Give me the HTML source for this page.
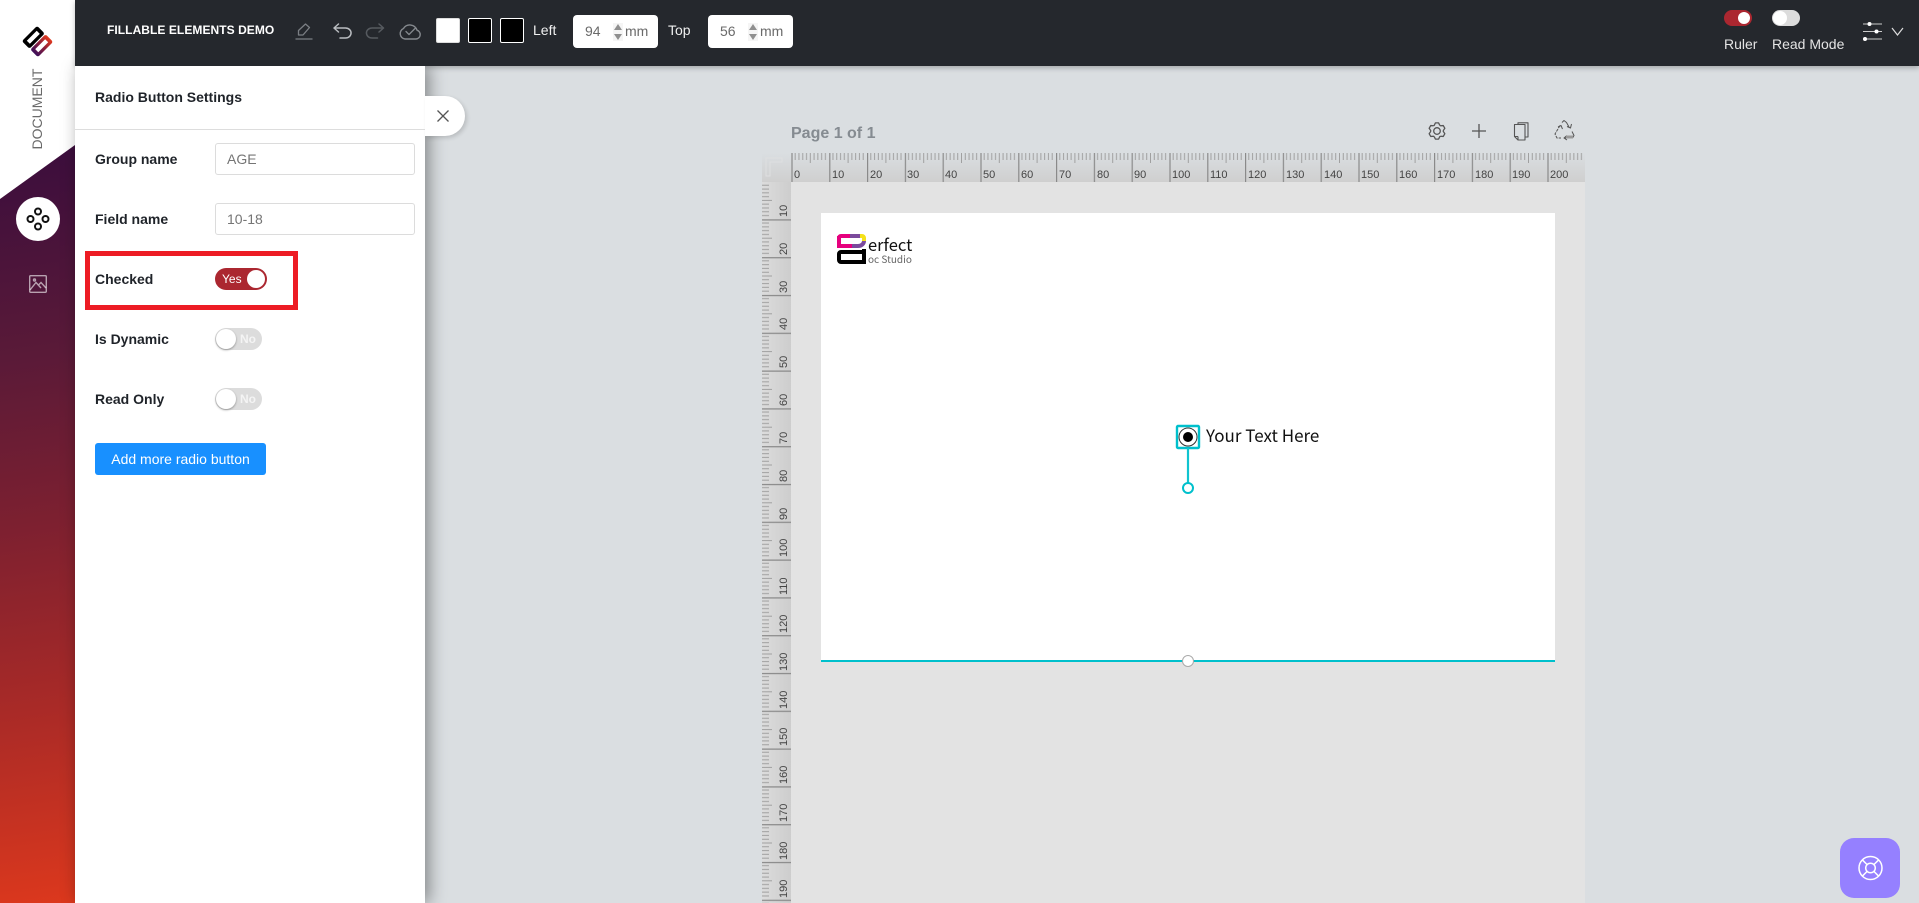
<!DOCTYPE html>
<html>
<head>
<meta charset="utf-8">
<title>Fillable Elements Demo</title>
<style>
html,body{margin:0;padding:0;width:1919px;height:903px;overflow:hidden;background:#dadee1;font-family:"Liberation Sans",sans-serif}
div,span,svg{position:absolute;box-sizing:border-box}
.t{white-space:nowrap;line-height:1}
.lbl{left:95px;font-size:14px;font-weight:bold;color:#1f2329;line-height:16px}
.inp{left:215px;width:200px;height:32px;border:1px solid #dcdcdc;border-radius:3px;background:#fff}
.sw{top:18px;width:24px;height:25px;border:1.5px solid #fff;border-radius:2px;background:#000}
.num{top:15px;width:85px;height:33px;background:#fff;border-radius:4px}
.knob{background:#fff;border-radius:50%}
.spin{top:23px;width:10px;height:18px;background:#f5f5f5}
</style>
</head>
<body>

<!-- workspace -->
<div style="left:791px;top:182px;width:794px;height:721px;background:#e3e3e3"></div>
<div style="left:821px;top:213px;width:734px;height:447px;background:#fff"></div>

<!-- rulers -->
<svg style="left:0;top:0" width="1919" height="903" viewBox="0 0 1919 903">
  <defs>
    <linearGradient id="rh" x1="0" y1="0" x2="0" y2="1"><stop offset="0" stop-color="#dadee1"/><stop offset="1" stop-color="#cfcfcf"/></linearGradient>
    <linearGradient id="rv" x1="0" y1="0" x2="1" y2="0"><stop offset="0" stop-color="#dcdcdc"/><stop offset="1" stop-color="#cdcdcd"/></linearGradient>
    <pattern id="ph" patternUnits="userSpaceOnUse" x="791.4" y="153" width="37.8" height="29">
      <path d="M3.78 0V7M7.56 0V7M11.34 0V7M15.12 0V7M18.9 0V10M22.68 0V7M26.46 0V7M30.24 0V7M34.02 0V7" stroke="#a0a0a0" stroke-width="1" fill="none"/>
      <path d="M.6 0V29" stroke="#8a8a8a" stroke-width="1.2"/>
    </pattern>
    <pattern id="pv" patternUnits="userSpaceOnUse" x="762" y="181.5" width="29" height="37.8">
      <path d="M0 3.78H7M0 7.56H7M0 11.34H7M0 15.12H7M0 18.9H10M0 22.68H7M0 26.46H7M0 30.24H7M0 34.02H7" stroke="#a0a0a0" stroke-width="1" fill="none"/>
      <path d="M0 .6H29" stroke="#8a8a8a" stroke-width="1.2"/>
    </pattern>
  </defs>
  <rect x="762" y="153" width="823" height="29" fill="url(#rh)"/>
  <rect x="762" y="182" width="29" height="721" fill="url(#rv)"/>
  <rect x="791" y="153" width="794" height="29" fill="url(#ph)"/>
  <rect x="762" y="183" width="29" height="720" fill="url(#pv)"/>
  <path d="M766 158H782V162H770V176H766Z" fill="none" stroke="#dedfe0" stroke-width="1"/>
  <g font-family="Liberation Sans" font-size="11" fill="#444">
    <text x="794" y="178">0</text><text x="832" y="178">10</text><text x="870" y="178">20</text><text x="907" y="178">30</text><text x="945" y="178">40</text><text x="983" y="178">50</text><text x="1021" y="178">60</text><text x="1059" y="178">70</text><text x="1097" y="178">80</text><text x="1134" y="178">90</text><text x="1172" y="178">100</text><text x="1210" y="178">110</text><text x="1248" y="178">120</text><text x="1286" y="178">130</text><text x="1324" y="178">140</text><text x="1361" y="178">150</text><text x="1399" y="178">160</text><text x="1437" y="178">170</text><text x="1475" y="178">180</text><text x="1512" y="178">190</text><text x="1550" y="178">200</text>
    <text transform="translate(787 217) rotate(-90)">10</text><text transform="translate(787 255) rotate(-90)">20</text><text transform="translate(787 293) rotate(-90)">30</text><text transform="translate(787 330) rotate(-90)">40</text><text transform="translate(787 368) rotate(-90)">50</text><text transform="translate(787 406) rotate(-90)">60</text><text transform="translate(787 444) rotate(-90)">70</text><text transform="translate(787 482) rotate(-90)">80</text><text transform="translate(787 520) rotate(-90)">90</text><text transform="translate(787 557) rotate(-90)">100</text><text transform="translate(787 595) rotate(-90)">110</text><text transform="translate(787 633) rotate(-90)">120</text><text transform="translate(787 671) rotate(-90)">130</text><text transform="translate(787 709) rotate(-90)">140</text><text transform="translate(787 746) rotate(-90)">150</text><text transform="translate(787 784) rotate(-90)">160</text><text transform="translate(787 822) rotate(-90)">170</text><text transform="translate(787 860) rotate(-90)">180</text><text transform="translate(787 898) rotate(-90)">190</text>
  </g>

  <!-- bottom guide line -->
  <rect x="821" y="660" width="734" height="2" fill="#00c0cc"/>
  <circle cx="1188" cy="661" r="5.5" fill="#fff" stroke="#aaa" stroke-width="1"/>

  <!-- radio element -->
  <rect x="1177" y="426" width="22" height="22" fill="#fff" stroke="#00c0cc" stroke-width="2.4" rx="1"/>
  <circle cx="1188" cy="437" r="9" fill="#fff" stroke="#333" stroke-width="1"/>
  <circle cx="1188" cy="437" r="5" fill="#000"/>
  <path d="M1188 448V483" stroke="#10c4d0" stroke-width="2.2"/>
  <circle cx="1188" cy="488" r="5" fill="#fff" stroke="#00c0cc" stroke-width="2"/>

  <!-- document logo -->
  <g fill="none" stroke-width="4">
    <path d="M852 246H839V238a2 2 0 0 1 2-2H852" stroke="#e6007e"/>
    <path d="M839 247V236" stroke="#e6007e"/>
    <path d="M850 236H861" stroke="#7b4a9c"/>
    <path d="M852 246H858a6 5 0 0 0 6-5" stroke="#7b4a9c"/>
    <path d="M860 236H862a2 2 0 0 1 2 2V241" stroke="#f5e11a"/>
    <path d="M864 249V262H841a2 2 0 0 1-2-2V254a2 2 0 0 1 2-2H864" stroke="#000"/>
  </g>
  <text x="868" y="251" font-family="Noto Sans CJK SC" font-size="16.5" fill="#111">erfect</text>
  <text x="868" y="263" font-family="Noto Sans CJK SC" font-size="10" fill="#666">oc Studio</text>
  <text x="1206" y="442" font-family="Noto Sans CJK SC" font-size="17" fill="#111">Your Text Here</text>

  <!-- page tools -->
  <g fill="none" stroke="#555" stroke-width="1.3" stroke-linejoin="round">
    <g transform="translate(1437 131)">
      <circle r="3.3"/>
      <path d="M2.760 -5.660L1.580 -8.150L-1.580 -8.150L-2.760 -5.660L-3.520 -5.220"/>
      <path transform="rotate(60)" d="M2.760 -5.660L1.580 -8.150L-1.580 -8.150L-2.760 -5.660L-3.520 -5.220"/>
      <path transform="rotate(120)" d="M2.760 -5.660L1.580 -8.150L-1.580 -8.150L-2.760 -5.660L-3.520 -5.220"/>
      <path transform="rotate(180)" d="M2.760 -5.660L1.580 -8.150L-1.580 -8.150L-2.760 -5.660L-3.520 -5.220"/>
      <path transform="rotate(240)" d="M2.760 -5.660L1.580 -8.150L-1.580 -8.150L-2.760 -5.660L-3.520 -5.220"/>
      <path transform="rotate(300)" d="M2.760 -5.660L1.580 -8.150L-1.580 -8.150L-2.760 -5.660L-3.520 -5.220"/>
    </g>
    <path d="M1479 124V138M1472 131H1486"/>
    <path d="M1518 124V122.800H1528V137H1525" stroke="#555" stroke-width="1.1"/>
    <path d="M1514.500 124.500H1525V140H1518L1514.500 136.500Z" stroke="#555" stroke-width="1.1"/>
    <path d="M1518 136.500V140M1514.500 136.500H1518" stroke="#555" stroke-width="1.1"/>
    <g stroke-width="1">
      <path d="M1562 122.500L1564 120.500L1566.500 122.500L1569 127"/>
      <path d="M1567 126.500L1570.500 128L1571.500 124"/>
      <path d="M1560 125.500L1555 134L1557 138H1561" stroke-dasharray="3 1"/>
      <path d="M1558 127L1561 125.500L1562.500 129"/>
      <path d="M1572 131.500L1574 135.500L1572.500 138H1565"/>
      <path d="M1567 135.500L1564 138L1567 140"/>
    </g>
  </g>
  <rect x="1566" y="135.500" width="7" height="3" fill="#999"/>
</svg>

<div class="t" style="left:791px;top:126px;font-size:16px;font-weight:bold;color:#858b91">Page 1 of 1</div>

<!-- left sidebar -->
<div style="left:0;top:0;width:75px;height:903px;background:#fff"></div>
<div style="left:0;top:145px;width:75px;height:758px;background:linear-gradient(172deg,#3a0d3d 0%,#5a1a38 28%,#7d2030 50%,#a92a27 74%,#dc381d 100%);clip-path:polygon(0 54px,75px 0,75px 758px,0 758px)"></div>
<svg style="left:0;top:0" width="75" height="300" viewBox="0 0 75 300">
  <defs><linearGradient id="lg" x1="0" y1="0" x2="1" y2="0"><stop offset="0" stop-color="#3b0f5a"/><stop offset=".5" stop-color="#8a1f3c"/><stop offset="1" stop-color="#e23a1e"/></linearGradient></defs>
  <g transform="translate(37.5 41.5) rotate(-45) scale(1.08)">
    <rect x="-10" y="-10.500" width="20" height="10" rx="2" fill="#000"/>
    <rect x="-6.500" y="-7.500" width="13" height="4" fill="#fff"/>
    <rect x="-10" y="0.500" width="20" height="10" rx="2" fill="url(#lg)"/>
    <rect x="-6.500" y="3.500" width="13" height="4" fill="#fff"/>
  </g>
  <circle cx="38" cy="219" r="22" fill="#fff"/>
  <g fill="none" stroke="#111" stroke-width="2">
    <circle cx="38" cy="211.500" r="3"/><circle cx="38" cy="226.500" r="3"/><circle cx="30.500" cy="219" r="3"/><circle cx="45.500" cy="219" r="3"/>
  </g>
  <g fill="none" stroke="#fff" stroke-opacity=".6" stroke-width="1.4">
    <rect x="29.700" y="275.700" width="16.600" height="16.600" rx="1"/>
    <path d="M30 290L36 282.500L41 288M38 285.500L41 282.500L46 288"/>
    <circle cx="34.500" cy="280" r="1"/>
  </g>
</svg>
<div class="t" style="left:37px;top:109px;font-size:14px;color:#6a6a6a;transform:translate(-50%,-50%) rotate(-90deg)">DOCUMENT</div>

<!-- settings panel -->
<div style="left:75px;top:66px;width:350px;height:837px;background:#fff;box-shadow:4px 0 16px rgba(0,0,0,.4)"></div>
<div style="left:425px;top:96px;width:40px;height:40px;background:#fff;border-radius:0 20px 20px 0;box-shadow:2px 2px 4px rgba(0,0,0,.15)"></div>
<svg style="left:436px;top:109px" width="14" height="14" viewBox="0 0 14 14"><path d="M1.500 1.500L12.500 12.500M12.500 1.500L1.500 12.500" stroke="#555" stroke-width="1.3"/></svg>

<div class="t" style="left:95px;top:90px;font-size:14px;font-weight:bold;color:#1f2329">Radio Button Settings</div>
<div style="left:75px;top:129px;width:350px;height:1px;background:#ddd"></div>

<div class="lbl" style="top:151px">Group name</div>
<div class="inp" style="top:143px"></div>
<div class="t" style="left:227px;top:152px;font-size:14px;color:#757575">AGE</div>

<div class="lbl" style="top:211px">Field name</div>
<div class="inp" style="top:203px"></div>
<div class="t" style="left:227px;top:212px;font-size:14px;color:#757575">10-18</div>

<div style="left:85px;top:251px;width:213px;height:59px;border:5px solid #ed1c24"></div>
<div class="lbl" style="top:271px">Checked</div>
<div style="left:215px;top:268px;width:52px;height:22px;border-radius:11px;background:#ab2730"></div>
<div class="t" style="left:222px;top:273px;font-size:12px;color:#fff">Yes</div>
<div class="knob" style="left:247px;top:270px;width:18px;height:18px"></div>

<div class="lbl" style="top:331px">Is Dynamic</div>
<div style="left:215px;top:328px;width:47px;height:22px;border-radius:11px;background:#dcdcdc"></div>
<div class="t" style="left:240px;top:333px;font-size:12px;font-weight:bold;color:#f4f4f4">No</div>
<div class="knob" style="left:216px;top:329px;width:20px;height:20px;box-shadow:0 1px 2px rgba(0,0,0,.35)"></div>

<div class="lbl" style="top:391px">Read Only</div>
<div style="left:215px;top:388px;width:47px;height:22px;border-radius:11px;background:#dcdcdc"></div>
<div class="t" style="left:240px;top:393px;font-size:12px;font-weight:bold;color:#f4f4f4">No</div>
<div class="knob" style="left:216px;top:389px;width:20px;height:20px;box-shadow:0 1px 2px rgba(0,0,0,.35)"></div>

<div style="left:95px;top:443px;width:171px;height:32px;background:#1890ff;border-radius:3px"></div>
<div class="t" style="left:95px;top:452px;width:171px;text-align:center;font-size:14px;color:#fff">Add more radio button</div>

<!-- top bar -->
<div style="left:75px;top:0;width:1844px;height:66px;background:#25282d;box-shadow:0 2px 5px rgba(0,0,0,.25)"></div>
<div style="left:75px;top:66px;width:350px;height:10px;background:#fff"></div>
<div class="t" style="left:107px;top:24px;font-size:12px;font-weight:bold;color:#fff;letter-spacing:.06px">FILLABLE ELEMENTS DEMO</div>
<svg style="left:280px;top:0" width="150" height="60" viewBox="280 0 150 60" fill="none" stroke-linecap="round" stroke-linejoin="round">
  <path d="M296 39H312" stroke="#7b7f84" stroke-width="1.3"/>
  <path d="M298.500 35V30.500L305.500 24L309.500 27.500L303 35Z" stroke="#7b7f84" stroke-width="1.3"/>
  <path d="M338.500 24L334 28L338.500 32M334 28H345.500a5 4.500 0 0 1 0 10H340" stroke="#b9bcc0" stroke-width="1.5"/>
  <path d="M379 24L383.500 28L379 32M383.500 28H372a5 4.500 0 0 0 0 10H377.500" stroke="#565a5f" stroke-width="1.500"/>
  <path d="M405 39H416a4.500 4.500 0 0 0 1-8.800A7.500 7.500 0 0 0 403.500 28.500a5.500 5.500 0 0 0 1.500 10.500Z" stroke="#85898e" stroke-width="1.400"/>
  <path d="M406 31.500L409 34.500L415 28.500" stroke="#85898e" stroke-width="1.300"/>
</svg>
<div class="sw" style="left:436px;background:#fff;border-color:#ddd"></div>
<div class="sw" style="left:468px"></div>
<div class="sw" style="left:500px"></div>
<div class="t" style="left:533px;top:23px;font-size:14px;color:#f0f0f0">Left</div>
<div class="num" style="left:573px"></div>
<div class="t" style="left:585px;top:24px;font-size:14px;color:#6a6a6a">94</div>
<div class="spin" style="left:613px"></div>
<svg style="left:613px;top:23px" width="10" height="18" viewBox="0 0 10 18"><path d="M5 1L9 7H1ZM5 17L1 11H9Z" fill="#8f8f8f"/></svg>
<div class="t" style="left:625px;top:24px;font-size:14px;color:#6a6a6a">mm</div>
<div class="t" style="left:668px;top:23px;font-size:14px;color:#f0f0f0">Top</div>
<div class="num" style="left:708px"></div>
<div class="t" style="left:720px;top:24px;font-size:14px;color:#6a6a6a">56</div>
<div class="spin" style="left:748px"></div>
<svg style="left:748px;top:23px" width="10" height="18" viewBox="0 0 10 18"><path d="M5 1L9 7H1ZM5 17L1 11H9Z" fill="#8f8f8f"/></svg>
<div class="t" style="left:760px;top:24px;font-size:14px;color:#6a6a6a">mm</div>

<div style="left:1724px;top:10px;width:28px;height:16px;border-radius:8px;background:#ab2730"></div>
<div class="knob" style="left:1738px;top:12px;width:12px;height:12px"></div>
<div style="left:1772px;top:10px;width:28px;height:16px;border-radius:8px;background:#dcdcdc"></div>
<div class="knob" style="left:1773px;top:11px;width:14px;height:14px"></div>
<div class="t" style="left:1724px;top:37px;font-size:14px;color:#e4e4e4">Ruler</div>
<div class="t" style="left:1772px;top:37px;font-size:14px;color:#e4e4e4">Read Mode</div>
<svg style="left:1860px;top:18px" width="48" height="26" viewBox="1860 18 48 26" fill="none">
  <path d="M1863 24H1882M1863 31.500H1882M1863 39H1882" stroke="#ccc" stroke-width="1"/>
  <circle cx="1869.500" cy="24" r="2" fill="#fff"/><circle cx="1876.500" cy="31.500" r="2" fill="#fff"/><circle cx="1865" cy="39" r="2" fill="#fff"/>
  <path d="M1892 28L1897.500 35L1903 28" stroke="#ddd" stroke-width="1.200"/>
</svg>

<!-- help button -->
<div style="left:1840px;top:838px;width:60px;height:60px;border-radius:14px;background:#9580ff"></div>
<svg style="left:1855px;top:853px" width="31" height="30" viewBox="0 0 31 30" fill="none" stroke="#fff" stroke-width="1.500">
  <circle cx="15.500" cy="15" r="11.500"/>
  <circle cx="15.500" cy="15" r="4.800"/>
  <path d="M7.300 6.800L12.100 11.600M23.700 6.800L18.900 11.600M7.300 23.200L12.100 18.400M23.700 23.200L18.900 18.400"/>
</svg>

</body>
</html>
